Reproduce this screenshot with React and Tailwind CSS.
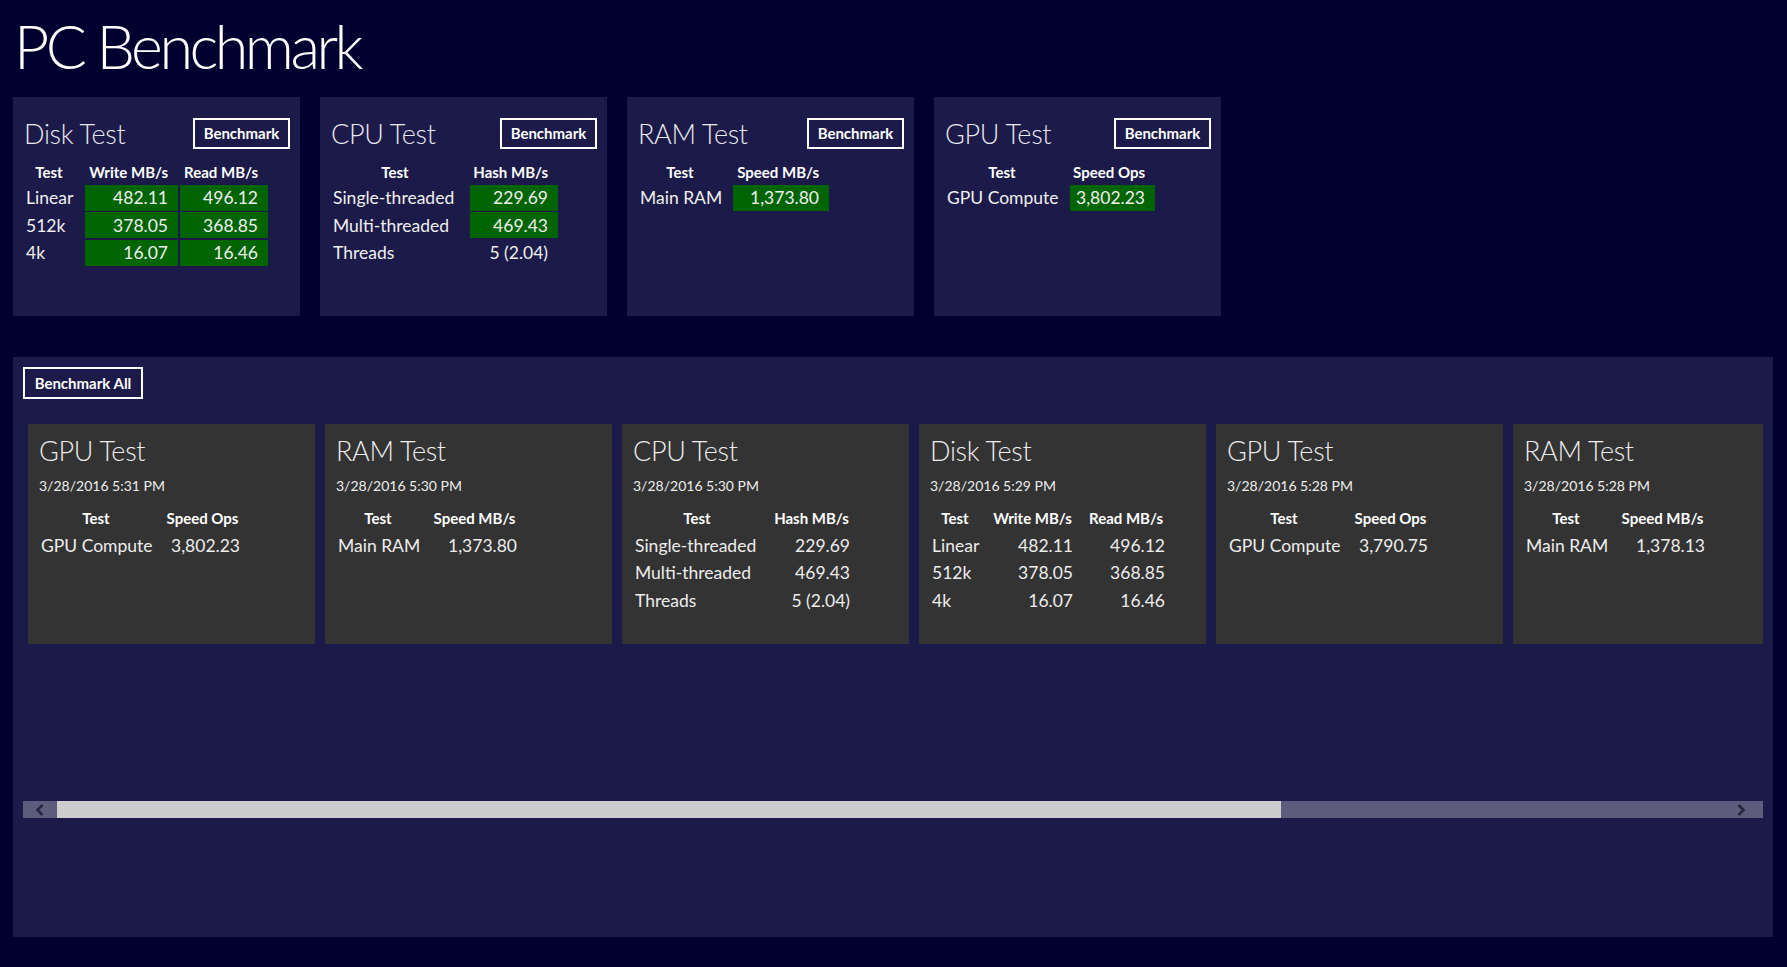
import React from "react";

const topCards = [
  {
    title: "Disk Test",
    cols: "grid-cols-[59px_93px_88px]",
    headers: ["Test", "Write MB/s", "Read MB/s"],
    rows: [
      ["Linear", "482.11", "496.12"],
      ["512k", "378.05", "368.85"],
      ["4k", "16.07", "16.46"],
    ],
    green: [true, true, true],
  },
  {
    title: "CPU Test",
    cols: "grid-cols-[137px_88px]",
    headers: ["Test", "Hash MB/s"],
    rows: [
      ["Single-threaded", "229.69"],
      ["Multi-threaded", "469.43"],
      ["Threads", "5 (2.04)"],
    ],
    green: [true, true, false],
  },
  {
    title: "RAM Test",
    cols: "grid-cols-[93px_96px]",
    headers: ["Test", "Speed MB/s"],
    rows: [["Main RAM", "1,373.80"]],
    green: [true],
  },
  {
    title: "GPU Test",
    cols: "grid-cols-[123px_85px]",
    headers: ["Test", "Speed Ops"],
    rows: [["GPU Compute", "3,802.23"]],
    green: [true],
  },
];

const history = [
  {
    title: "GPU Test",
    date: "3/28/2016 5:31 PM",
    cols: "grid-cols-[114px_79px]",
    headers: ["Test", "Speed Ops"],
    rows: [["GPU Compute", "3,802.23"]],
  },
  {
    title: "RAM Test",
    date: "3/28/2016 5:30 PM",
    cols: "grid-cols-[84px_89px]",
    headers: ["Test", "Speed MB/s"],
    rows: [["Main RAM", "1,373.80"]],
  },
  {
    title: "CPU Test",
    date: "3/28/2016 5:30 PM",
    cols: "grid-cols-[128px_81px]",
    headers: ["Test", "Hash MB/s"],
    rows: [
      ["Single-threaded", "229.69"],
      ["Multi-threaded", "469.43"],
      ["Threads", "5 (2.04)"],
    ],
  },
  {
    title: "Disk Test",
    date: "3/28/2016 5:29 PM",
    cols: "grid-cols-[50px_85px_82px]",
    headers: ["Test", "Write MB/s", "Read MB/s"],
    rows: [
      ["Linear", "482.11", "496.12"],
      ["512k", "378.05", "368.85"],
      ["4k", "16.07", "16.46"],
    ],
  },
  {
    title: "GPU Test",
    date: "3/28/2016 5:28 PM",
    cols: "grid-cols-[114px_79px]",
    headers: ["Test", "Speed Ops"],
    rows: [["GPU Compute", "3,790.75"]],
  },
  {
    title: "RAM Test",
    date: "3/28/2016 5:28 PM",
    cols: "grid-cols-[84px_89px]",
    headers: ["Test", "Speed MB/s"],
    rows: [["Main RAM", "1,378.13"]],
  },
];

function TopCard({ card }) {
  return (
    <div className="w-[287px] h-[219px] shrink-0 bg-[#1b1a48] pl-[11px] pr-[10px] pt-[21px]">
      <div className="flex items-center justify-between h-[31px]">
        <div className="text-[27px] leading-none font-light text-[#e8e8ee] tracking-[-0.3px]">{card.title}</div>
        <button className="w-[97px] h-[31px] border-2 border-white text-white text-[15px] font-bold leading-none">
          Benchmark
        </button>
      </div>
      <div className={`grid ${card.cols} gap-x-[2px] gap-y-[1.5px] mt-[12px]`}>
        {card.headers.map((h, i) =>
          i === 0 ? (
            <div key={i} className="pr-[9px] h-[22px] flex items-center justify-center text-[15px] font-bold text-white">
              {h}
            </div>
          ) : (
            <div key={i} className="h-[22px] pl-[2px] pr-[10px] flex items-center justify-end text-[15px] font-bold text-white whitespace-nowrap">
              {h}
            </div>
          )
        )}
        {card.rows.map((r, ri) =>
          r.map((c, ci) =>
            ci === 0 ? (
              <div key={`${ri}-${ci}`} className="pr-[9px] pl-[2px] pt-[2px] h-[26px] flex items-center text-[17.5px] text-[#f0f0f0] whitespace-nowrap">
                {c}
              </div>
            ) : (
              <div
                key={`${ri}-${ci}`}
                className={`h-[26px] pl-[2px] pr-[10px] pt-[2px] flex items-center justify-end text-[17.5px] text-[#f0f0f0] whitespace-nowrap ${
                  card.green[ri] ? "bg-[#006400]" : ""
                }`}
              >
                {c}
              </div>
            )
          )
        )}
      </div>
    </div>
  );
}

function HistoryCard({ card }) {
  return (
    <div className="w-[287px] h-[220px] shrink-0 bg-[#333333] pl-[11px] pt-[13px]">
      <div className="text-[27px] leading-none font-light text-[#ededed] tracking-[-0.3px]">{card.title}</div>
      <div className="mt-[12px] text-[14px] leading-[20px] text-[#ededed]">{card.date}</div>
      <div className={`grid ${card.cols} gap-x-[10px] mt-[9px]`}>
        {card.headers.map((h, i) => (
          <div key={i} className="h-[26px] flex items-center justify-center text-[15px] font-bold text-white whitespace-nowrap">
            {h}
          </div>
        ))}
        {card.rows.map((r, ri) =>
          r.map((c, ci) => (
            <div
              key={`${ri}-${ci}`}
              className={`h-[27.5px] px-[2px] pt-[2px] flex items-center text-[17.5px] text-[#ededed] whitespace-nowrap ${
                ci === 0 ? "justify-start" : "justify-end"
              }`}
            >
              {c}
            </div>
          ))
        )}
      </div>
    </div>
  );
}

export default function App() {
  return (
    <div className="w-[1787px] h-[967px] overflow-hidden bg-[#00002e] font-['Lato','Open_Sans',sans-serif] text-white">
      <div className="pl-[14px] pt-[15px]">
        <h1 className="text-[61px] leading-none font-light text-white tracking-[-3.5px]">PC Benchmark</h1>
      </div>
      <div className="flex gap-[20px] pl-[13px] mt-[21px]">
        {topCards.map((c, i) => (
          <TopCard key={i} card={c} />
        ))}
      </div>
      <div className="ml-[13px] mt-[41px] w-[1760px] h-[580px] bg-[#1b1a48] pt-[10px]">
        <div className="pl-[10px]">
          <button className="w-[120px] h-[32px] border-2 border-white text-white text-[15px] font-bold leading-none">
            Benchmark All
          </button>
        </div>
        <div className="ml-[15px] mr-[10px] mt-[25px] overflow-hidden">
          <div className="flex gap-[10px]">
            {history.map((c, i) => (
              <HistoryCard key={i} card={c} />
            ))}
          </div>
        </div>
        <div className="mx-[10px] mt-[157px] h-[17px] flex bg-[#5e5b7d]">
          <div className="w-[34px] h-full flex items-center justify-center">
            <svg width="10" height="12" viewBox="0 0 10 12">
              <path d="M7.5 1 L2.5 6 L7.5 11" fill="none" stroke="#262640" strokeWidth="2.6" />
            </svg>
          </div>
          <div className="w-[1224px] h-full bg-[#cdcdcd]" />
          <div className="flex-1 h-full flex items-center justify-end pr-[17px]">
            <svg width="10" height="12" viewBox="0 0 10 12">
              <path d="M2.5 1 L7.5 6 L2.5 11" fill="none" stroke="#262640" strokeWidth="2.6" />
            </svg>
          </div>
        </div>
      </div>
    </div>
  );
}
